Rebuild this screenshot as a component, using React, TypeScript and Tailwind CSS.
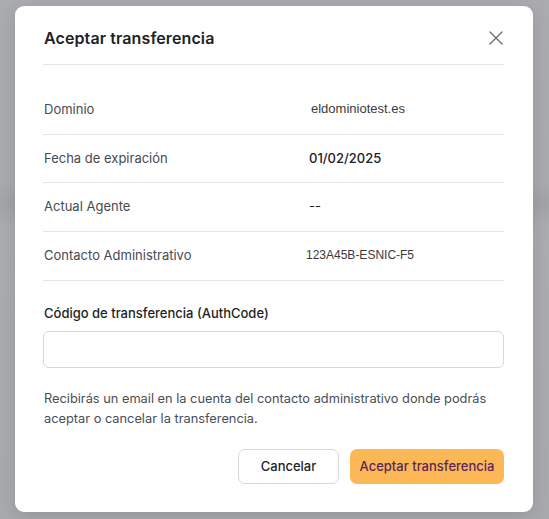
import React from "react";

const rows: { label: string; value: string; cls: string }[] = [
  { label: "Dominio", value: "eldominiotest.es", cls: "font-['Liberation_Sans',Arial,sans-serif] text-[13px] text-[#3a3a3a] -translate-y-[1px] pl-[2px]" },
  { label: "Fecha de expiración", value: "01/02/2025", cls: "font-['Inter',sans-serif] text-[13px] font-medium text-[#1f2128]" },
  { label: "Actual Agente", value: "--", cls: "font-['Inter',sans-serif] text-[13px] text-[#1f2128]" },
  { label: "Contacto Administrativo", value: "123A45B-ESNIC-F5", cls: "font-['Liberation_Sans',Arial,sans-serif] text-[12px] text-[#3a3a3a] -translate-y-[1px] -ml-[3px]" },
];

export default function App() {
  return (
    <div className="w-[549px] h-[519px] bg-[linear-gradient(180deg,#aaabaf_0%,#a9aaae_35%,#a2a3a7_39%,#abacb0_44%,#a8a9ad_100%)] pt-[6px] pl-[15px] font-['Inter',sans-serif]">
      <div className="w-[518px] h-[506px] bg-white rounded-[9px] pl-[28px] pr-[29px] pt-[16px] shadow-[0_4px_16px_rgba(0,0,0,0.12)]">
        <div className="flex items-center justify-between h-[32px] pl-[1px]">
          <h2 className="text-[16px] font-semibold text-[#1d1f26] tracking-[0.1px]">Aceptar transferencia</h2>
          <svg width="16" height="16" viewBox="0 0 16 16" className="text-[#6b6e75]">
            <path d="M2 2L14 14M14 2L2 14" stroke="currentColor" strokeWidth="1.4" strokeLinecap="round" />
          </svg>
        </div>
        <div className="mt-[10px] border-t border-[#e4e5e8]" />
        <div className="pt-[21px]">
          {rows.map((r) => (
            <div key={r.label} className="flex items-center h-[48.7px] border-b border-[#e4e5e8] pl-[1px]">
              <div className="w-[265px] text-[13px] text-[#474a52]">{r.label}</div>
              <div className={r.cls}>{r.value}</div>
            </div>
          ))}
        </div>
        <div className="mt-[23px] pl-[1px] text-[13px] font-medium text-[#1d1f26]">Código de transferencia (AuthCode)</div>
        <input className="mt-[8px] block w-full h-[37px] rounded-[6px] border border-[#d6d7db] outline-none px-3 text-[13px]" />
        <p className="mt-[21px] pl-[1px] text-[12.8px] leading-[19.5px] text-[#4a4d55]">
          Recibirás un email en la cuenta del contacto administrativo donde podrás aceptar o cancelar la transferencia.
        </p>
        <div className="mt-[21px] flex justify-end gap-[11px]">
          <button className="w-[101px] h-[35px] rounded-[7px] border border-[#d6d7db] bg-white text-[13px] font-medium text-[#1d1f26]">Cancelar</button>
          <button className="w-[154px] h-[35px] rounded-[7px] bg-[#fcb757] text-[13px] font-medium text-[#5e2558]">Aceptar transferencia</button>
        </div>
      </div>
    </div>
  );
}
